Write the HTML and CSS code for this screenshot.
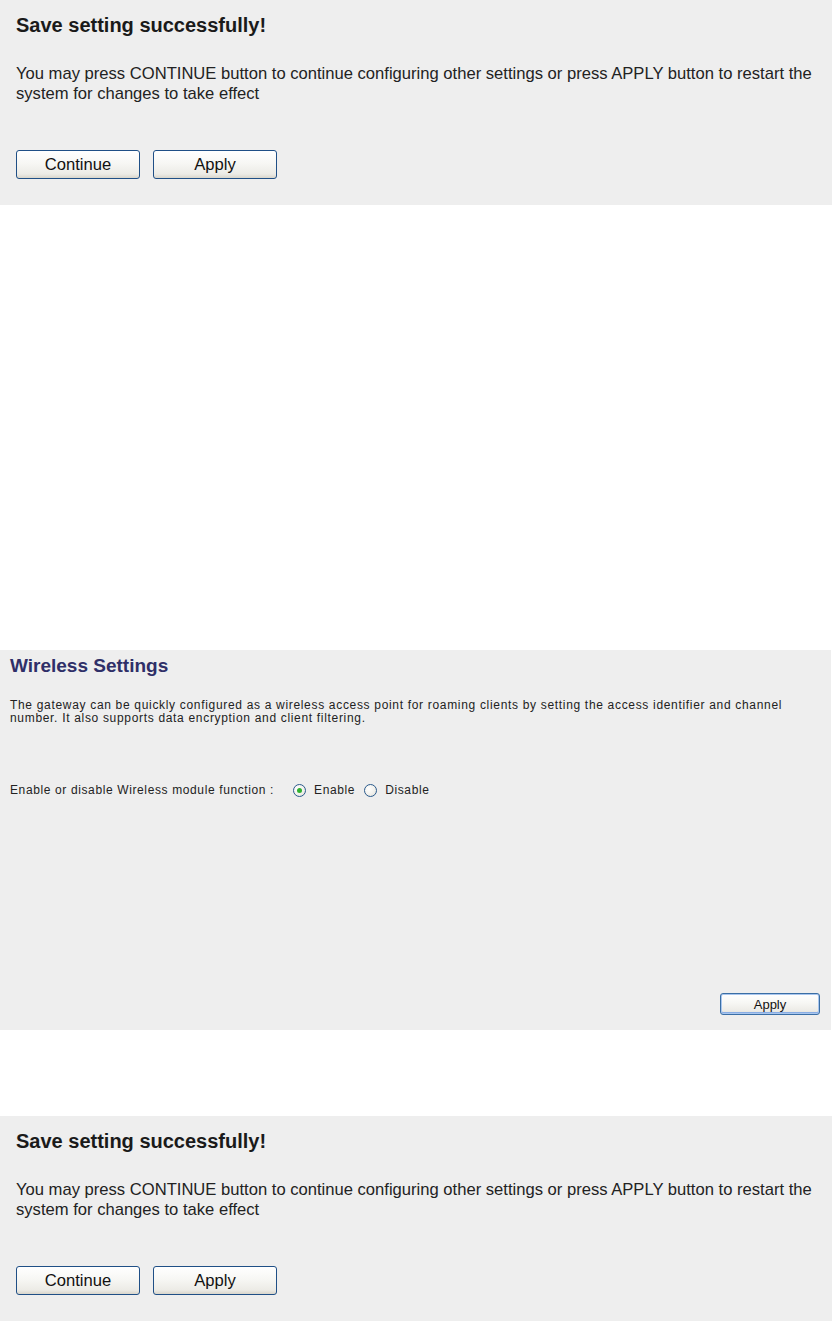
FILE: index.html
```html
<!DOCTYPE html>
<html lang="en">
<head>
<meta charset="utf-8">
<title>Save setting / Wireless Settings</title>
<link rel="stylesheet" href="styles.css">
</head>
<body>
<section class="panel panel-save">
  <h2 class="save-title">Save setting successfully!</h2>
  <p class="save-text">You may press CONTINUE button to continue configuring other settings or press APPLY button to restart the system for changes to take effect</p>
  <div class="btn-row">
    <button class="btn btn-lg" type="button">Continue</button>
    <button class="btn btn-lg" type="button">Apply</button>
  </div>
</section>

<section class="panel panel-wireless">
  <h2 class="wl-title">Wireless Settings</h2>
  <p class="wl-text">The gateway can be quickly configured as a wireless access point for roaming clients by setting the access identifier and channel number. It also supports data encryption and client filtering.</p>
  <div class="wl-row">
    <span class="wl-label">Enable or disable Wireless module function :</span>
    <label class="opt"><span class="radio radio-on"></span>Enable</label>
    <label class="opt"><span class="radio"></span>Disable</label>
  </div>
  <div class="wl-actions">
    <button class="btn btn-sm" type="button">Apply</button>
  </div>
</section>

<section class="panel panel-save panel-last">
  <h2 class="save-title">Save setting successfully!</h2>
  <p class="save-text">You may press CONTINUE button to continue configuring other settings or press APPLY button to restart the system for changes to take effect</p>
  <div class="btn-row">
    <button class="btn btn-lg" type="button">Continue</button>
    <button class="btn btn-lg" type="button">Apply</button>
  </div>
</section>
</body>
</html>
```
FILE: styles.css
```css
html, body {
  margin: 0;
  padding: 0;
  background: #ffffff;
}
body {
  font-family: "Liberation Sans", Arial, sans-serif;
  color: #1e1e1e;
}
.panel {
  background: #eeeeee;
  box-sizing: border-box;
}
.panel-save {
  width: 832px;
  padding: 13px 8px 26px 16px;
}
.panel-wireless {
  width: 831px;
  margin-top: 445px;
  min-height: 380px;
  padding: 5px 11px 15px 10px;
  display: flex;
  flex-direction: column;
}
.panel-last {
  margin-top: 86px;
}
.save-title {
  margin: 0;
  font-size: 20px;
  line-height: 24px;
  font-weight: bold;
  color: #1a1a1a;
}
.save-text {
  margin: 27px 0 0 0;
  font-size: 16.6px;
  line-height: 20px;
  color: #222222;
}
.btn-row {
  margin-top: 46px;
  display: flex;
  gap: 13px;
}
.btn {
  font-family: "Liberation Sans", Arial, sans-serif;
  color: #111111;
  border: 1px solid #1f4f86;
  border-radius: 3px;
  background: linear-gradient(#ffffff 0%, #f7f7f4 45%, #ecebe6 85%, #d9d6cc 100%);
  padding: 0;
  margin: 0;
  box-sizing: border-box;
}
.btn-lg {
  width: 124px;
  height: 29px;
  font-size: 16.6px;
}
.btn-sm {
  width: 100px;
  height: 22px;
  font-size: 13px;
  border-color: #3a6ea5;
  box-shadow: inset 0 0 0 1px #a9c6ee, inset 0 -1px 0 1px #89ade4;
}
.wl-title {
  margin: 0;
  font-size: 19px;
  line-height: 22px;
  font-weight: bold;
  color: #2f2f68;
}
.wl-text {
  margin: 22px 0 0 0;
  font-size: 12px;
  letter-spacing: 0.68px;
  line-height: 13px;
  color: #222222;
}
.wl-row {
  margin-top: 58px;
  display: flex;
  align-items: center;
  font-size: 12px;
  letter-spacing: 0.62px;
  line-height: 14px;
  color: #222222;
}
.wl-label {
  margin-right: 19px;
}
.opt {
  display: inline-flex;
  align-items: center;
  margin-right: 9px;
}
.radio {
  width: 13px;
  height: 13px;
  box-sizing: border-box;
  border-radius: 50%;
  border: 1px solid #2a5a8c;
  background: radial-gradient(circle at 35% 35%, #ffffff 0%, #f0efea 60%, #dcdad2 100%);
  margin-right: 8px;
  display: inline-block;
  position: relative;
}
.radio-on::after {
  content: "";
  position: absolute;
  left: 3px;
  top: 3px;
  width: 5px;
  height: 5px;
  border-radius: 50%;
  background: #2fb12f;
}
.wl-actions {
  margin-top: auto;
  display: flex;
  justify-content: flex-end;
}
```
